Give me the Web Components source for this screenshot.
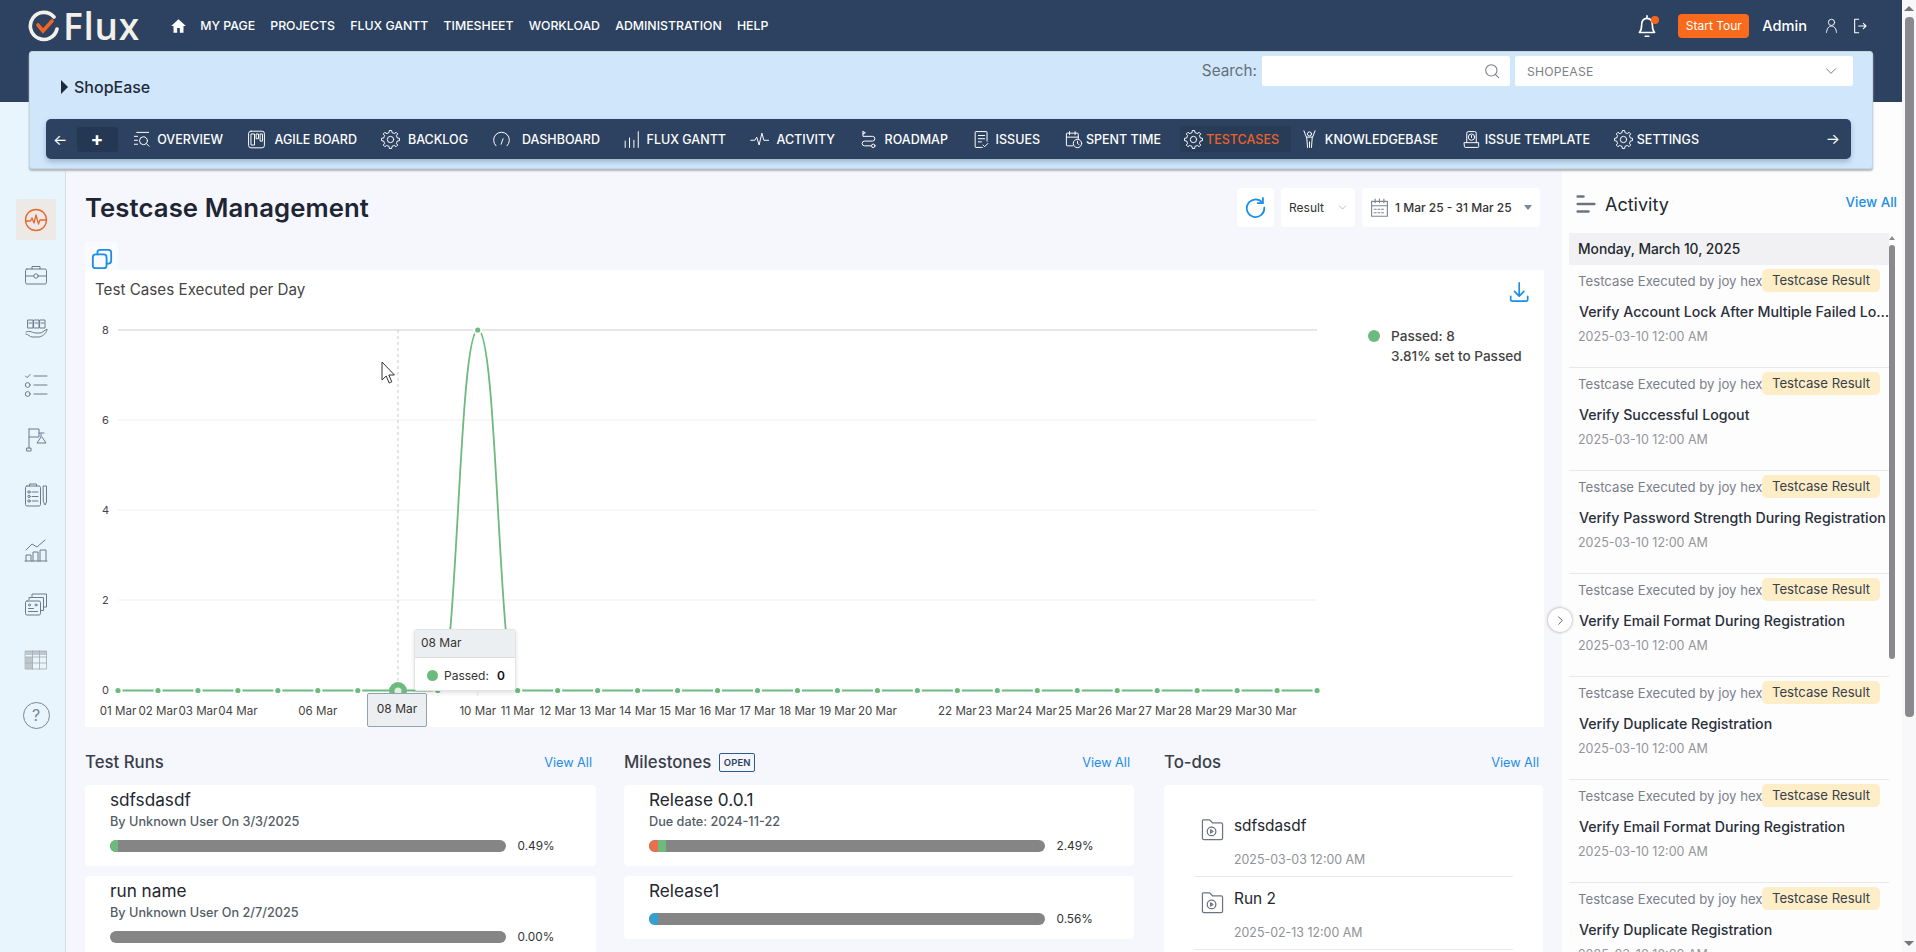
<!DOCTYPE html>
<html lang="en"><head><meta charset="utf-8"><title>Flux</title>
<style>
html,body{margin:0;padding:0;height:952px;overflow:hidden;background:#f6f6fd;font-family:Inter,"Liberation Sans",sans-serif;color:#2a2f3a}
body{display:flex}
</style></head><body>
<flux-page></flux-page>
<page-scroll></page-scroll>
<script>
function gear(cx,cy,R,r,n){let d='';const s=Math.PI*2/n;for(let i=0;i<n;i++){const a=i*s-Math.PI/2;const pts=[[r,a-s*.5],[r,a-s*.28],[R,a-s*.16],[R,a+s*.16],[r,a+s*.28]];pts.forEach((p,j)=>{const x=(cx+p[0]*Math.cos(p[1])).toFixed(2),y=(cy+p[0]*Math.sin(p[1])).toFixed(2);d+=(i==0&&j==0?'M':'L')+x+' '+y});}return d+'Z'}
const G=`<path d="${gear(12,12,11.5,8.8,8)}"/><circle cx="12" cy="12" r="4"/>`;
const ICONS={
overview:'<path d="M6 3h15M3 8h4M3 13h4M3 18h4"/><circle cx="14.5" cy="13.5" r="5"/><path d="M18 17l3.5 3.5"/>',
agile:'<rect x="2" y="1.5" width="20" height="21" rx="3"/><path d="M5.5 5h4v14h-4zM12 5h2.5v6H12zM17 5h2.5v9H17z"/>',
gear:G,
dash:'<path d="M5 20a10 10 0 1 1 14 0"/><path d="M11.5 18l2.5-7"/>',
gantt:'<path d="M1.5 14v8M7 10v12M12.5 13v9M18 2v20"/>',
activity:'<path d="M1 13h5l2.5-4 3 10 3.5-15 2.5 9h6"/>',
road:'<path d="M5 2v6h12a3 3 0 0 1 0 6H7a3 3 0 0 0 0 6h8"/><path d="M5 2l3 1.5L5 5"/><circle cx="18" cy="20" r="2.2"/>',
issues:'<path d="M19 14V3a1 1 0 0 0-1-1H5a1 1 0 0 0-1 1v18a1 1 0 0 0 1 1h8"/><path d="M8 7h8M8 11h8M8 15h4M14 19l2 2 4-4"/>',
spent:'<path d="M11 20H4a1 1 0 0 1-1-1V5a1 1 0 0 1 1-1h13a1 1 0 0 1 1 1v6M3 9h15M7 2v4M14 2v4"/><circle cx="17" cy="17" r="5.3"/><path d="M17 14v3l2 1.4"/>',
know:'<circle cx="12" cy="5" r="2.6"/><path d="M5 1l3 8h8l3-8M8.5 9l1 13M15.5 9l-1 13M12 15v7"/>',
template:'<path d="M6 16V4a2 2 0 0 1 2-2h8a2 2 0 0 1 2 2v12"/><circle cx="12" cy="9" r="4"/><path d="M12 7v2.5M3 16h18v5a1 1 0 0 1-1 1H4a1 1 0 0 1-1-1z"/>',
home:'<path fill="currentColor" stroke="none" d="M12 2L1 12h3.5v10h5.5v-7h4v7h5.5V12H23z"/>',
bell:'<path d="M5 18c1.5-1.5 2-3 2-6.5C7 7.5 9 5 12 5s5 2.5 5 6.5c0 3.5.5 5 2 6.5zM12 2.5V5M10.3 21.5h3.4"/>',
user:'<circle cx="12" cy="7" r="5"/><path d="M4 23c.5-6 3.5-10 8-10s7.5 4 8 10"/>',
logout:'<path d="M10 2H4v20h6M10 12h11M17 8l4 4-4 4"/>',
search:'<circle cx="11" cy="11" r="8.5"/><path d="M17 17l5 5"/>',
chev:'<path d="M4 8l8 8 8-8"/>',
refresh:'<path d="M19.5 6.2A10 10 0 1 0 22 12"/><path d="M20.5 1v6h-6"/>',
cal:'<path d="M3 5h18v17H3zM3 10h18M7 2.5v4M12 2.5v4M17 2.5v4"/><path stroke-dasharray="2.2 2" d="M6 14h12M6 18h12"/>',
copy:'<rect x="2" y="7" width="15" height="15" rx="3"/><path d="M7 7V5a3 3 0 0 1 3-3h9a3 3 0 0 1 3 3v9a3 3 0 0 1-3 3h-2"/>',
down:'<path d="M12 1v15M6.5 11l5.5 5.5 5.5-5.5M2 17v4a1.5 1.5 0 0 0 1.5 1.5h17A1.5 1.5 0 0 0 22 21v-4"/>',
lines:'<path d="M2 3h7M2 12h20M2 21h13"/>',
r_pulse:'<circle cx="12" cy="12" r="10.5"/><path d="M2 13h4.5l1.5-3 2 5 2-8 2.5 9 1.5-4h6"/>',
r_case:'<rect x="1.5" y="6" width="21" height="15" rx="1.5"/><path d="M8 6V3.5h8V6M1.5 13h8M14.5 13h8"/><circle cx="12" cy="13" r="2.2"/>',
r_hand:'<rect x="4" y="2" width="5" height="8"/><rect x="10" y="2" width="5" height="8"/><rect x="16" y="2" width="5" height="8"/><path d="M5 5h3M11 5h3M17 5h3M2 14c4-2 7 1 10 1h5l6-4c0 3-3 7-8 8H8c-2 0-4-3-6-3"/>',
r_list:'<path d="M1.5 3l1.7 1.7L6 1.5M10 3h13M10 12h13M10 21h13"/><circle cx="3.7" cy="12" r="2.4"/><circle cx="3.7" cy="21" r="2.4"/>',
r_flag:'<path d="M5 20V1M5 1h10v8H5M15 5h5M3 20h4v3H3zM17 6v3l-4 6h9l-4-6"/>',
r_clip:'<rect x="1.5" y="3" width="15" height="20" rx="1.5"/><path d="M5.5 3V1h7v2M8 9h6M8 13.5h6M8 18h6"/><circle cx="5" cy="9" r="1.2"/><circle cx="5" cy="13.5" r="1.2"/><circle cx="5" cy="18" r="1.2"/><path d="M19.5 3h3v16l-1.5 3-1.5-3z"/>',
r_chart:'<path d="M1 23h22M2 23v-6h5v6M9 23v-9h5v9M16 23v-11h6v11M2 12l6-6 5 3 8-7"/>',
r_cards:'<rect x="1.5" y="8" width="15" height="14" rx="1.5"/><path d="M5 7V4.5h14.5v13H17M8 3.5V1h14.5v13h-3"/><path d="M4.5 15.5h5M4.5 18.5h9"/><circle cx="5.5" cy="12" r="1"/><circle cx="12" cy="12" r="1"/>',
r_table:'<rect x="1.5" y="3" width="21" height="18"/><path d="M8.5 3v18M15.5 3v18M1.5 9h21M1.5 15h21"/><path fill="currentColor" stroke="none" d="M1.5 3h21v4h-21zM1.5 9h7v12h-7z" opacity=".6"/>',
folder:'<path d="M2 2h7l3 3h9a1.5 1.5 0 0 1 1.5 1.5V21a1.5 1.5 0 0 1-1.5 1.5H3A1.5 1.5 0 0 1 1.5 21V2.5"/><circle cx="11" cy="14" r="4.5"/><path d="M10 12.3l2.5 1.7-2.5 1.7z"/>'
};
function def(name,css,html,init){customElements.define(name,class extends HTMLElement{
  connectedCallback(){if(this.shadowRoot)return;const s=this.attachShadow({mode:'open'});
  const a=n=>this.getAttribute(n);s.innerHTML=`<style>${css}</style>`+(typeof html=='function'?html(a,this):html);if(init)init(s,this)}})}
def('ui-icon',':host{display:inline-flex;flex:none}svg{display:block;width:100%;height:100%;fill:none;stroke:currentColor;stroke-linecap:round;stroke-linejoin:round}',
 a=>`<svg viewBox="0 0 24 24" stroke-width="${a('sw')||1.4}">${ICONS[a('n')]||''}</svg>`);

def('top-link',':host{display:block;color:#fff;font-size:12.3px;font-weight:500;white-space:nowrap}','<slot></slot>');
def('top-bar',`:host{display:flex;align-items:center;height:51px;padding:0 34px 0 28px;background:#2c4260;box-sizing:content-box;padding-bottom:51px;flex:none}
.logo{display:flex;align-items:center;width:142px;gap:3px;color:#f2f0e8;font:600 37px/40px "Open Sans",sans-serif;height:40px;letter-spacing:.7px}
.logo svg{width:32px;height:32px;flex:none}
.links{display:flex;align-items:center;gap:15.2px}
.links ui-icon{width:17px;height:16px;color:#fff;margin-right:-2px}
.sp{flex:1}
.bell{position:relative;width:20px;height:22px;color:#fff;margin-right:20px}.bell ui-icon{width:26px;height:26px;margin:-2px 0 0 -4px}
.bell i{position:absolute;right:-1px;top:1px;width:8px;height:8px;border-radius:50%;background:#f9651d}
.tour{background:#f96a1c;color:#fff;font-size:12px;width:71px;height:24px;line-height:24px;text-align:center;border-radius:4px;margin-right:13px}
.adm{color:#fff;font-size:14.6px;font-weight:500;margin-right:17px}
.u{width:15px;height:17px;color:#fff;margin-right:13px}.o{width:16px;height:16px;color:#fff}`,
`<div class="logo"><svg viewBox="0 0 32 32"><path d="M26 7A13.5 13.5 0 1 0 29 19" fill="none" stroke="#f2f0e8" stroke-width="3.6" stroke-linecap="round"/><path d="M10 15l5 6 9-10" fill="none" stroke="#f26522" stroke-width="3.6" stroke-linecap="round"/></svg><span>Flux</span></div>
<div class="links"><ui-icon n="home"></ui-icon><top-link>MY PAGE</top-link><top-link>PROJECTS</top-link><top-link>FLUX GANTT</top-link><top-link>TIMESHEET</top-link><top-link>WORKLOAD</top-link><top-link>ADMINISTRATION</top-link><top-link>HELP</top-link></div>
<div class="sp"></div><div class="bell"><ui-icon n="bell" sw="1.5"></ui-icon><i></i></div><div class="tour">Start Tour</div><div class="adm">Admin</div><ui-icon class="u" n="user" sw="1.5"></ui-icon><ui-icon class="o" n="logout" sw="1.6"></ui-icon>`);

def('tab-item',`:host{display:flex;align-items:center;justify-content:space-between;height:26px;box-sizing:border-box;color:#fff;font-size:12.5px;font-weight:500;white-space:nowrap;flex:none}
ui-icon{width:19px;height:19px}
:host([active]){background:#283c57;color:#ea622b;border-radius:3px;padding:0 12px 0 4px;margin:0 -15px 0 -5px}
:host([active]) ui-icon{color:#fff}`,
 a=>`<ui-icon n="${a('i')}" sw="1.25"></ui-icon><slot></slot>`,(s,h)=>{h.style.width=h.getAttribute('w')+'px'});
def('project-bar',`:host{display:block;position:relative;z-index:2;flex:none;height:118px;box-sizing:border-box;margin:-51px 29px -67px;background:#cfe6fb;border:1px solid #c8d4de;border-radius:3px;box-shadow:0 2px 2px #b3b6bd}
.top{display:flex;align-items:flex-start;height:67px;padding:4px 19px 0 31px;box-sizing:border-box}
.name{display:flex;align-items:center;gap:6px;font-size:16px;font-weight:500;color:#1f2b3c;margin-top:22px;height:18px}
.name i{border-left:7px solid #1f2b3c;border-top:7px solid transparent;border-bottom:7px solid transparent}
.sp{flex:1}
.lab{font-size:15.3px;color:#666f7a;line-height:30px;margin-right:5px}
.inp{width:248px;height:30px;background:#fff;border-radius:2px;display:flex;align-items:center;justify-content:flex-end;padding-right:10px;box-sizing:border-box;margin-right:5px;color:#7a7f87}
.inp ui-icon{width:16px;height:16px}
.sel{width:338px;height:30px;background:#fff;border-radius:2px;display:flex;align-items:center;justify-content:space-between;padding:0 15px 0 12px;box-sizing:border-box;font-size:12.2px;color:#7c8088;letter-spacing:.2px}
.sel ui-icon{width:14px;height:14px;color:#666}
.bar{display:flex;align-items:center;height:40px;margin:0 21px 0 16px;background:#2c4260;border-radius:5px;box-shadow:0 3px 5px rgba(70,100,130,.35);padding-left:7px;gap:24px;position:relative;color:#fff}
.arr{font-size:15px;width:14px;line-height:1;flex:none;margin-right:-14px}
.plus{width:41px;height:25px;background:#253853;border-radius:3px;display:flex;align-items:center;justify-content:center;font-size:19px;font-weight:700;flex:none;margin:0 -9.5px 0 -.5px}
.end{position:absolute;right:11px;top:12px;font-size:15px;line-height:1}
.tabs{display:flex;align-items:center;gap:24px}`,
`<div class="top"><div class="name"><i></i>ShopEase</div><div class="sp"></div><div class="lab">Search:</div><div class="inp"><ui-icon n="search" sw="1.6"></ui-icon></div><div class="sel">SHOPEASE<ui-icon n="chev"></ui-icon></div></div>
<div class="bar"><span class="arr">←</span><span class="plus">+</span><div class="tabs">
<tab-item i="overview" w="91">OVERVIEW</tab-item><tab-item i="agile" w="110">AGILE BOARD</tab-item><tab-item i="gear" w="87">BACKLOG</tab-item><tab-item i="dash" w="108">DASHBOARD</tab-item><tab-item i="gantt" w="102">FLUX GANTT</tab-item><tab-item i="activity" w="85">ACTIVITY</tab-item><tab-item i="road" w="89">ROADMAP</tab-item><tab-item i="issues" w="68">ISSUES</tab-item><tab-item i="spent" w="97">SPENT TIME</tab-item><tab-item i="gear" w="111" active>TESTCASES</tab-item><tab-item i="know" w="138">KNOWLEDGEBASE</tab-item><tab-item i="template" w="128">ISSUE TEMPLATE</tab-item><tab-item i="gear" w="85">SETTINGS</tab-item>
</div><span class="end">→</span></div>`);

def('side-rail',`:host{display:flex;flex-direction:column;align-items:flex-start;width:49px;flex:none;background:#e9f5fd;border-right:1px solid #d8dde2;box-sizing:content-box;padding:97px 0 0 16px;height:753px;color:#6d7a8a}
.b{width:40px;height:41px;display:flex;align-items:center;justify-content:center;margin-bottom:14.1px;flex:none}
.b.on{background:#ece9e6;border-radius:2px;color:#e9672d}
ui-icon{width:24px;height:24px}
.q{width:25px;height:25px;border:1.3px solid #7a8590;border-radius:50%;font-size:16px;display:flex;align-items:center;justify-content:center;color:#7a8590}`,
`<div class="b on"><ui-icon n="r_pulse" sw="1.3"></ui-icon></div><div class="b"><ui-icon n="r_case" sw="1"></ui-icon></div><div class="b"><ui-icon n="r_hand" sw="1"></ui-icon></div><div class="b"><ui-icon n="r_list" sw="1"></ui-icon></div><div class="b"><ui-icon n="r_flag" sw="1"></ui-icon></div><div class="b"><ui-icon n="r_clip" sw="1"></ui-icon></div><div class="b"><ui-icon n="r_chart" sw="1"></ui-icon></div><div class="b"><ui-icon n="r_cards" sw="1"></ui-icon></div><div class="b"><ui-icon n="r_table" sw=".8" style="color:#a3a8ae"></ui-icon></div><div class="b"><div class="q">?</div></div>`);

def('head-row',`:host{display:flex;align-items:center;height:39px;margin-bottom:15px}
h1{font-size:25.7px;font-weight:600;margin:0;color:#1e2533;letter-spacing:.1px}
.sp{flex:1}.box{height:39px;background:#fff;border-radius:4px;display:flex;align-items:center;box-sizing:border-box;font-size:12px;color:#333}
.r{width:37px;justify-content:center;color:#1c8ee6;margin-right:7px}.r ui-icon{width:21px;height:21px}
.s{width:74px;padding:0 8px;justify-content:space-between;margin-right:7px}.s ui-icon{width:9px;height:9px;color:#aaa}
.d{width:178px;padding:0 7px;margin-right:4px;font-weight:500}.d ui-icon{width:21px;height:21px;color:#7d8590;margin-right:5px}
.c{border-top:5px solid #7d8590;border-left:4.5px solid transparent;border-right:4.5px solid transparent;margin-left:auto;margin-right:1px}`,
`<h1>Testcase Management</h1><div class="sp"></div><div class="box r"><ui-icon n="refresh" sw="2"></ui-icon></div><div class="box s">Result<ui-icon n="chev" sw="2"></ui-icon></div><div class="box d"><ui-icon n="cal" sw="1.3"></ui-icon>1 Mar 25 - 31 Mar 25<span class="c"></span></div>`);

def('copy-tab',':host{display:flex;align-items:flex-start;justify-content:center;width:33px;height:28px;background:#fafaff;color:#1c8ee6}ui-icon{width:24px;height:22px;margin-top:6px}','<ui-icon n="copy" sw="2"></ui-icon>');

def('chart-card',`:host{display:block;position:relative;height:457px;width:1459px;background:#fff;border-radius:2px;overflow:visible}
svg{display:block;width:1459px;height:457px;font-family:inherit}
.tip{position:absolute;left:329px;top:359px;width:102px;height:62px;background:#fff;border:1px solid #e3e3e3;box-sizing:border-box;border-radius:3px;box-shadow:0 2px 4px rgba(0,0,0,.12);font-size:12px;color:#333}
.tip header{height:27px;background:#eceff1;border-bottom:1px solid #ddd;line-height:26px;padding-left:6px}
.tip div{display:flex;align-items:center;height:34px;padding-left:12px}
.tip i{width:11px;height:11px;border-radius:50%;background:#6cba7d;margin-right:6px}
.tip b{margin-left:8px;font-weight:600;color:#111}
.xt{position:absolute;left:282px;top:423px;width:60px;height:34px;background:#eceff1;border:1px solid #90a4ae;border-radius:2px;box-sizing:border-box;font-size:12px;line-height:30px;text-align:center;color:#333}`,
()=>{
 const X=i=>118+i*39.97,Y=690.5,g='#6cba7d';let s='<svg viewBox="85 270 1459 457">';
 s+='<text x="95" y="295" font-size="15.2" fill="#444">Test Cases Executed per Day</text>';
 [[330,'8'],[420,'6'],[510,'4'],[600,'2'],[690,'0']].forEach(([y,t],i)=>{if(i<4)s+=`<line x1="118" x2="1317" y1="${y}" y2="${y}" stroke="${i==0?'#dedede':'#efefef'}" stroke-width="${i==0?1.5:1}"/>`;s+=`<text x="102" y="${y+4}" font-size="11" fill="#444">${t}</text>`});
 s+=`<line x1="398" x2="398" y1="330" y2="691" stroke="#c9c9c9" stroke-dasharray="3 3"/>`;
 for(let i=0;i<=30;i++)s+=`<line x1="${X(i)}" x2="${X(i)}" y1="692" y2="696" stroke="#e6e6e6"/>`;
 s+=`<path d="M118 ${Y}H438C458 ${Y} 458 330 478 330C498 330 498 ${Y} 518 ${Y}H1317" fill="none" stroke="${g}" stroke-width="1.8"/>`;
 for(let i=0;i<=30;i++){s+=`<circle cx="${X(i)}" cy="${i==9?330:Y}" r="3.6" fill="${g}" stroke="#fff" stroke-width="2"/>`}
 s+=`<circle cx="398" cy="691" r="9" fill="${g}"/><circle cx="398" cy="691" r="3.5" fill="#dff0e3"/>`;
 const hide={4:1,6:1,7:1,8:1,20:1,30:1};
 for(let i=0;i<=30;i++){if(hide[i])continue;s+=`<text x="${X(i)}" y="715" font-size="11.6" fill="#444" text-anchor="middle">${String(i+1).padStart(2,'0')} Mar</text>`}
 s+=`<circle cx="1374" cy="336" r="6" fill="${g}"/><text x="1391" y="340.5" font-size="13.6" font-weight="500" fill="#444">Passed: 8</text><text x="1391" y="361" font-size="13.6" font-weight="500" fill="#444">3.81% set to Passed</text>`;
 s+=`<g transform="translate(1509 282) scale(.85)" fill="none" stroke="#1c8ee6" stroke-width="2" stroke-linecap="round" stroke-linejoin="round">${ICONS.down}</g>`;
 s+=`<path d="M382 362v18l4.2-4 3 7 2.6-1.2-3-6.8h5.6z" fill="#fff" stroke="#333" stroke-width="1"/>`;
 return s+'</svg><div class="tip"><header>08 Mar</header><div><i></i>Passed: <b>0</b></div></div><div class="xt">08 Mar</div>'
});

def('sec-title',`:host{display:flex;align-items:center;height:24px;margin-bottom:11px;font-size:16.8px;font-weight:500;color:#3a3f4a}
.t{flex:none}.sp{flex:1}
a{font-size:12.7px;font-weight:400;color:#1c8ee6;margin-right:4px}`,
'<span class="t"><slot name="t"></slot></span><slot></slot><div class="sp"></div><a>View All</a>');
def('open-tag',':host{display:inline-block;margin-left:8px;border:1px solid #2c5a8c;border-radius:2px;font-size:9.5px;font-weight:600;color:#2c4260;padding:0 3.5px;line-height:17px;letter-spacing:.1px}','OPEN');
def('run-card',`:host{display:block;background:#fff;border-radius:4px;padding:4px 0 14px 25px;margin-bottom:10px}
.t{font-size:17.2px;line-height:22px;color:#23272f}
.s{font-size:12.7px;font-weight:500;line-height:18px;color:#555c66;margin-top:2px}
.r{display:flex;align-items:center;margin-top:9px;height:12px}
.no{margin-top:11px}
.b{width:395.5px;height:12px;border-radius:6px;background:#858585;display:flex;overflow:hidden}
.b i{display:block;height:12px}
.p{margin-left:12px;font-size:11.8px;color:#333}`,
a=>{const sub=a('sub');const segs=(a('segs')||'').split(',').filter(Boolean).map(x=>{const[c,w]=x.split(':');return`<i style="background:${c};width:${w}px"></i>`}).join('');
return `<div class="t">${a('name')}</div>${sub?`<div class="s">${sub}</div>`:''}<div class="r ${sub?'':'no'}"><div class="b">${segs}</div><span class="p">${a('pct')}</span></div>`});
def('todo-item',`:host{display:grid;grid-template-columns:40px 1fr;width:319px;height:73px;border-bottom:1.5px solid #e9e9e9;box-sizing:border-box}
ui-icon{width:25px;height:23px;color:#6d7480;margin:14px 0 0 6px}
.t{font-size:15.4px;line-height:20px;margin-top:12px;color:#23272f}.d{font-size:12.4px;color:#8f9297;margin-top:16px;line-height:16px}`,
a=>`<ui-icon n="folder" sw="1.3"></ui-icon><div><div class="t">${a('name')}</div><div class="d">${a('date')}</div></div>`);
def('todo-card',':host{display:block;background:#fff;border-radius:4px;padding:19px 0 0 30px;height:200px}','<slot></slot>');
def('act-item',`:host{display:block;height:103px;border-bottom:1px solid #e9e9ec;box-sizing:border-box;padding-left:9px;position:relative;flex:none}
.a{display:flex;align-items:flex-start;height:36px;padding-top:4px;box-sizing:border-box}
.by{font-size:13.2px;color:#7b7f8a;width:184px;white-space:nowrap;overflow:hidden;line-height:24px}
.tag{width:118px;height:23px;background:#fdeec8;border-radius:5px;font-size:13.2px;color:#3a3f4a;line-height:23px;text-align:center;flex:none}
.t{font-size:14.2px;font-weight:500;color:#2a2f3a;line-height:22px;white-space:nowrap;overflow:hidden;text-overflow:ellipsis;width:311px;margin-left:1px}
.d{font-size:12.5px;color:#93959a;line-height:16px;margin-top:6px}`,
a=>`<div class="a"><div class="by">Testcase Executed by joy hex</div><div class="tag">Testcase Result</div></div><div class="t">${a('name')}</div><div class="d">2025-03-10 12:00 AM</div>`);
def('act-panel',`:host{display:block;position:relative;width:340px;flex:none;background:#fdfdfe;padding-top:84px;height:766px;box-sizing:content-box}
.h{display:flex;align-items:center;height:36px;margin-bottom:11px;padding:0 5px 0 13px}
.h ui-icon{width:22px;height:20px;color:#6d7480;margin-right:8px}
.h b{font-size:18px;font-weight:400;color:#23272f}.sp{flex:1}.h a{font-size:13.4px;color:#1c8ee6;font-weight:500;margin-top:-4px}
.w{display:flex;margin-left:7px;height:719px;overflow:hidden}
.l{width:320px;flex:none;display:flex;flex-direction:column}
.day{height:32px;background:#f1f1f3;font-size:13.8px;font-weight:500;line-height:33px;padding-left:9px;color:#23272f;flex:none}
.sb{width:6px;position:relative;flex:none}
.sb i{display:block;border-left:3px solid transparent;border-right:3px solid transparent;border-bottom:4px solid #8c8c90;margin-top:3px}
.sb u{display:block;width:6px;height:414px;background:#8a8a8e;border-radius:3px;margin-top:5px}
.c{position:absolute;left:-14px;top:506px;width:24px;height:24px;border-radius:50%;background:#fff;box-shadow:0 0 3px rgba(0,0,0,.4);display:flex;align-items:center;justify-content:center;color:#555}
.c ui-icon{width:11px;height:11px}`,
`<div class="h"><ui-icon n="lines" sw="3"></ui-icon><b>Activity</b><div class="sp"></div><a>View All</a></div>
<div class="w"><div class="l"><div class="day">Monday, March 10, 2025</div>
<act-item name="Verify Account Lock After Multiple Failed Login Attempts"></act-item><act-item name="Verify Successful Logout"></act-item><act-item name="Verify Password Strength During Registration"></act-item><act-item name="Verify Email Format During Registration"></act-item><act-item name="Verify Duplicate Registration"></act-item><act-item name="Verify Email Format During Registration"></act-item><act-item name="Verify Duplicate Registration"></act-item>
</div><div class="sb"><i></i><u></u></div></div><div class="c"><ui-icon n="chev" sw="2"  style="transform:rotate(-90deg)"></ui-icon></div>`);
def('main-view',`:host{display:block;width:1459px;flex:1;padding:86px 18px 0 19px;height:764px;overflow:hidden;background:#f6f6fd}
.cols{display:flex;margin-top:23px}.c1{width:511px;margin-right:28px;flex:none}.c2{width:510px;margin-right:30px;flex:none}.c3{width:379px;flex:none}`,
`<head-row></head-row><copy-tab></copy-tab><chart-card></chart-card>
<div class="cols"><div class="c1"><sec-title><span slot="t">Test Runs</span></sec-title>
<run-card name="sdfsdasdf" sub="By Unknown User On 3/3/2025" pct="0.49%" segs="#6cba7d:8"></run-card><run-card name="run name" sub="By Unknown User On 2/7/2025" pct="0.00%"></run-card></div>
<div class="c2"><sec-title><span slot="t">Milestones</span><open-tag></open-tag></sec-title>
<run-card name="Release 0.0.1" sub="Due date: 2024-11-22" pct="2.49%" segs="#e8704f:9,#6cba7d:8"></run-card><run-card name="Release1" pct="0.56%" segs="#35a0d0:9"></run-card></div>
<div class="c3"><sec-title><span slot="t">To-dos</span></sec-title><todo-card><todo-item name="sdfsdasdf" date="2025-03-03 12:00 AM"></todo-item><todo-item name="Run 2" date="2025-02-13 12:00 AM"></todo-item></todo-card></div></div>`);
def('flux-page',`:host{display:flex;flex-direction:column;width:1902px;height:952px;flex:none;overflow:hidden}
.row{display:flex;flex:1;min-height:0}`,
`<top-bar></top-bar><project-bar></project-bar><div class="row"><side-rail></side-rail><main-view></main-view><act-panel></act-panel></div>`);
def('page-scroll',`:host{display:flex;flex-direction:column;align-items:center;width:14px;height:952px;flex:none;background:#f8f8fb}
i{display:block;border-left:5px solid transparent;border-right:5px solid transparent;border-bottom:5px solid #777;margin-top:6px}
u{display:block;width:9px;height:700px;background:#8a8a8e;border-radius:4px;margin-top:6px;margin-left:1px}
b{display:block;border-left:5px solid transparent;border-right:5px solid transparent;border-top:5px solid #777;margin-top:auto;margin-bottom:6px}`,'<i></i><u></u><b></b>');
</script></body></html>
